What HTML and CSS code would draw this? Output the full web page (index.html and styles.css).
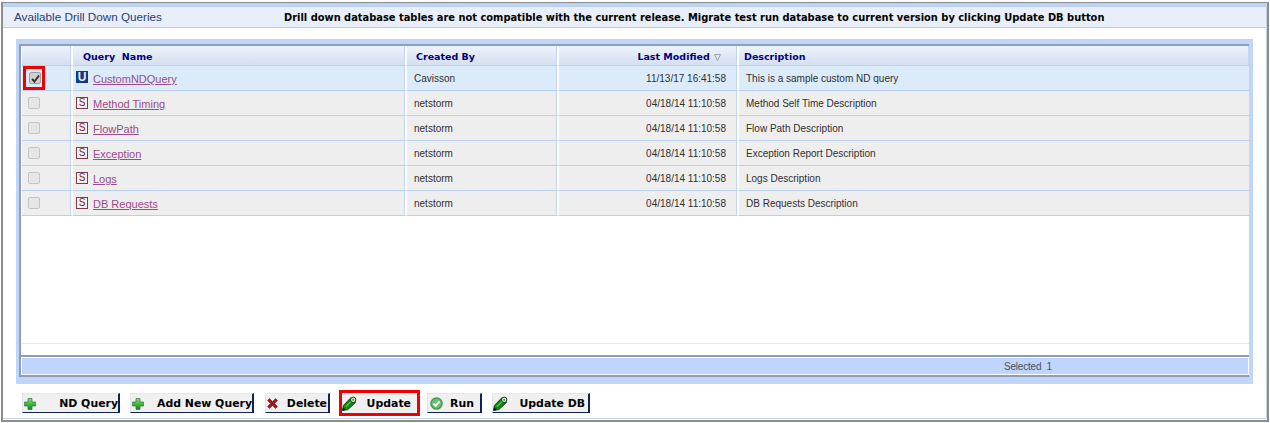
FILE: index.html
```html
<!DOCTYPE html>
<html lang="en">
<head>
<meta charset="utf-8">
<title>Available Drill Down Queries</title>
<link rel="stylesheet" href="styles.css">
</head>
<body>
<svg class="defs" width="0" height="0" aria-hidden="true">
  <defs>
    <linearGradient id="gp" x1="0" y1="0" x2="0" y2="1"><stop offset="0" stop-color="#7fe07a"/><stop offset="1" stop-color="#0f8a1a"/></linearGradient>
    <symbol id="plus" viewBox="0 0 12 12"><path d="M4 0.500h4v3.500h3.500v4H8v3.500H4V8H.5V4H4z" fill="url(#gp)" stroke="#2a7a2e" stroke-width=".7"/></symbol>
    <symbol id="cross" viewBox="0 0 11 11"><path d="M.5 2.500l2-2L5.500 3.500l3-3 2 2-3 3 3 3-2 2-3-3-3 3-2-2 3-3z" fill="#a5141a" stroke="#7a1015" stroke-width=".5"/></symbol>
    <symbol id="pencil" viewBox="0 0 15 15"><path d="M.5 14.500l.9-5L8.800 1.800l4.700 4.700L5.800 13.600z" fill="#0f8416" stroke="#0a3f0c" stroke-width=".9"/><path d="M3.800 10.800l6.400-6.500" stroke="#55c64c" stroke-width="1.300"/><circle cx="11.200" cy="3.800" r="2.700" fill="#d3ecc8" stroke="#0a3f0c" stroke-width="1"/><circle cx="11.200" cy="3.800" r="1" fill="#4f9342"/><path d="M.5 14.500l.6-3.200 2.600 2.600z" fill="#111"/></symbol>
    <symbol id="ok" viewBox="0 0 13 13"><circle cx="6.500" cy="6.500" r="6.300" fill="#4a9c55"/><circle cx="6.500" cy="6.500" r="4.700" fill="#6cc070"/><path d="M3.400 6.600l2.200 2.300 4-4.600" fill="none" stroke="#fff" stroke-width="1.800"/></symbol>
  </defs>
</svg>
<main class="window">
  <header class="title-bar">
    <span class="title">Available Drill Down Queries</span>
    <span class="notice">Drill down database tables are not compatible with the current release. Migrate test run database to current version by clicking Update DB button</span>
  </header>
  <section class="frame">
    <div class="grid-box">
      <div class="table-area">
        <table class="queries">
          <colgroup><col class="c1"><col class="c2"><col class="c3"><col class="c4"><col class="c5"></colgroup>
          <thead>
            <tr><th></th><th class="h-name">Query&nbsp; Name</th><th class="h-by">Created By</th><th class="h-mod">Last Modified <svg class="sort" width="7" height="7" viewBox="0 0 7 7"><path d="M.5 .5h6L3.500 6.500z" fill="none" stroke="#9aa3b5"/></svg></th><th class="h-desc">Description</th></tr>
          </thead>
          <tbody>
            <tr class="selected"><td class="chk"><span class="hl"><span class="box on"><svg width="9" height="9" viewBox="0 0 9 9"><path d="M1 5l2.500 2.500L8 1.500" fill="none" stroke="#333" stroke-width="2"/></svg></span></span></td><td><span class="badge u">U</span><a href="#">CustomNDQuery</a></td><td>Cavisson</td><td class="date">11/13/17 16:41:58</td><td class="desc">This is a sample custom ND query</td></tr>
            <tr><td class="chk"><span class="box"></span></td><td><span class="badge">S</span><a href="#">Method Timing</a></td><td>netstorm</td><td class="date">04/18/14 11:10:58</td><td class="desc">Method Self Time Description</td></tr>
            <tr><td class="chk"><span class="box"></span></td><td><span class="badge">S</span><a href="#">FlowPath</a></td><td>netstorm</td><td class="date">04/18/14 11:10:58</td><td class="desc">Flow Path Description</td></tr>
            <tr><td class="chk"><span class="box"></span></td><td><span class="badge">S</span><a href="#">Exception</a></td><td>netstorm</td><td class="date">04/18/14 11:10:58</td><td class="desc">Exception Report Description</td></tr>
            <tr><td class="chk"><span class="box"></span></td><td><span class="badge">S</span><a href="#">Logs</a></td><td>netstorm</td><td class="date">04/18/14 11:10:58</td><td class="desc">Logs Description</td></tr>
            <tr><td class="chk"><span class="box"></span></td><td><span class="badge">S</span><a href="#">DB Requests</a></td><td>netstorm</td><td class="date">04/18/14 11:10:58</td><td class="desc">DB Requests Description</td></tr>
          </tbody>
        </table>
      </div>
      <div class="footer-bar"><span class="selected-count">Selected&nbsp; 1</span></div>
    </div>
  </section>
  <div class="actions">
    <button class="btn w-nd" type="button"><svg class="ic" width="12" height="12"><use href="#plus"/></svg><span>ND Query</span></button>
    <button class="btn w-add" type="button"><svg class="ic" width="12" height="12"><use href="#plus"/></svg><span>Add New Query</span></button>
    <button class="btn w-del" type="button"><svg class="ic" width="11" height="11"><use href="#cross"/></svg><span>Delete</span></button>
    <button class="btn w-upd marked" type="button"><svg class="ic" width="15" height="15"><use href="#pencil"/></svg><span>Update</span></button>
    <button class="btn w-run" type="button"><svg class="ic" width="13" height="13"><use href="#ok"/></svg><span>Run</span></button>
    <button class="btn w-db" type="button"><svg class="ic" width="15" height="15"><use href="#pencil"/></svg><span>Update DB</span></button>
  </div>
</main>
</body>
</html>
```
FILE: styles.css
```css
* { box-sizing: border-box; }
html, body { margin: 0; height: 423px; background: #fff; overflow: hidden; }
.defs { position: absolute; }
.window {
  margin: 2px 1px 1px 1px;
  height: 420px;
  border: 2px solid #8c8c8c;
  border-top-width: 1px;
  box-shadow: inset 0 -2px 0 #fff, inset -1px 0 0 #c3d4ef;
  padding-top: 4px;
  position: relative;
  font-family: "Liberation Sans", Arial, sans-serif;
}
.window::after { content: ""; position: absolute; left: 0; right: 0; bottom: 1px; height: 1px; background: #c3d4ef; }
.title-bar {
  height: 21px;
  margin-right: 1px;
  background: #e8eefa;
  border-bottom: 1px solid #b9cbe8;
  box-shadow: 0 -4px 0 #bcd2f5;
  display: flex;
  align-items: center;
  padding-left: 11px;
}
.title { font-size: 11.7px; color: #1f3f7a; width: 270px; flex: none; margin-bottom: 2px; }
.notice { font-family: "DejaVu Sans", Verdana, sans-serif; font-weight: bold; font-size: 9.9px; color: #000; white-space: nowrap; }
.frame {
  margin: 11px 0 0 13px;
  width: 1237px;
  height: 345px;
  background: #c0d5f8;
  padding: 5px 4px 7px 3px;
}
.grid-box { height: 333px; display: flex; flex-direction: column; background: #fff; border-top: 2px solid #8e9dbb; border-left: 2px solid #8e9dbb; }
.table-area { height: 309px; border-left: 1px solid #fff; position: relative; }
.table-area::after { content: ""; position: absolute; left: 0; right: 0; bottom: 11px; height: 1px; background: #dfe8f5; }
.queries { border-collapse: separate; border-spacing: 0; table-layout: fixed; width: 1227px; }
.c1 { width: 51px; }
.c2 { width: 334px; }
.c3 { width: 152px; }
.c4 { width: 180px; }
th {
  height: 20px;
  padding: 1px 0 0;
  font-family: "DejaVu Sans", Verdana, sans-serif;
  font-size: 9.5px;
  font-weight: bold;
  color: #00007f;
  text-align: left;
  background: linear-gradient(#eef3fb, #d4dfef);
  border-right: 2px solid #fff;
  border-bottom: 1px solid #bcd0ef;
  box-shadow: inset -1px 0 0 #c3d4ef;
  white-space: nowrap;
}
.h-name { padding-left: 10px; }
.h-by { padding-left: 9px; }
.h-mod { text-align: right; padding-right: 16px; }
.h-desc { padding-left: 5px; border-right: 0; }
.sort { margin-left: 1px; vertical-align: -1px; }
td {
  height: 25px;
  padding: 0 0 0 7px;
  font-size: 10px;
  color: #303030;
  background: #eee;
  border-right: 2px solid #fff;
  border-bottom: 1px solid #b9cff0;
  box-shadow: inset -1px 0 0 #c3d4ef;
  white-space: nowrap;
}
.selected td { background: #dbebfa; }
td:nth-child(2) { padding: 2px 0 0 3px; }
.date { text-align: right; padding-right: 11px; }
td.desc { border-right: 0; box-shadow: none; }
.chk { padding: 0; position: relative; }
.box {
  display: flex;
  align-items: center;
  justify-content: center;
  width: 12px;
  height: 12px;
  margin-left: 6px;
  border: 1px solid #c4c4c4;
  border-radius: 2px;
  background: #e6e6e6;
}
.box.on { background: #d0d0d0; border-color: #a0a0a0; margin-left: 0; }
.hl { display: block; position: absolute; left: 1px; top: 0; width: 22px; height: 24px; border: 3px solid #ee0000; padding: 3px; }
.badge {
  display: inline-block;
  width: 12px;
  height: 12px;
  margin: -4px 5px 0 0;
  border: 1px solid #7c3b46;
  color: #6b2a35;
  background: #f5f0f0;
  font-family: "Liberation Sans", Arial, sans-serif;
  font-size: 10px;
  line-height: 10px;
  text-align: center;
  vertical-align: 2px;
}
.badge.u { background: #123a82; border-color: #123a82; color: #e8eefa; font-weight: bold; font-size: 12px; }
a { color: #9b4a8c; font-size: 11px; }
.footer-bar {
  height: 22px;
  background: #c0d5fb;
  border-top: 2px solid #8e9dbb;
  border-bottom: 2px solid #8e9dbb;
  box-shadow: inset 0 0 0 1px #fff;
  display: flex;
  align-items: center;
  padding: 1px 0 0 983px;
}
.selected-count { font-size: 10px; letter-spacing: -0.2px; color: #4a4f60; }
.actions { display: flex; align-items: flex-start; gap: 10px; margin: 9px 0 0 19px; }
.btn {
  height: 20px;
  padding: 1px 0 0 1px;
  display: flex;
  align-items: center;
  justify-content: space-between;
  background: #f0f0f0;
  border: 0;
  border-right: 2px solid #10215c;
  border-bottom: 1px solid #10215c;
  border-left: 1px solid #dfe6f2;
  border-top: 1px solid #dfe6f2;
  font-family: "DejaVu Sans", Verdana, sans-serif;
  font-weight: bold;
  font-size: 10.9px;
  color: #000;
}
.ic { flex: none; }
.w-nd { width: 98px; }
.w-add { width: 124px; }
.w-del { width: 65px; margin-left: 1px; }
.w-upd { width: 75px; margin-left: 2px; border-color: transparent; }
.w-run { width: 55px; }
.w-db { width: 98px; }
.w-upd span { padding-right: 4px; }
.w-run span { padding-right: 6px; }
.w-db span { padding-right: 3px; }
.w-del span { padding-right: 1px; }
.w-upd .ic { margin-left: -2px; }
.w-run .ic { margin-left: 1px; }
.w-db .ic { margin-left: -1px; }
.marked { outline: 3px solid #ee0000; outline-offset: 0; }
```
